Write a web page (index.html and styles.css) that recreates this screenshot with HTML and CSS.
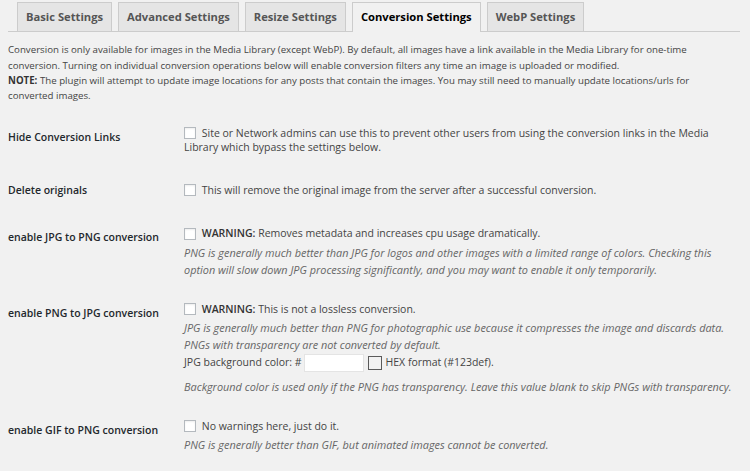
FILE: index.html
```html
<!DOCTYPE html>
<html lang="en">
<head>
<meta charset="utf-8">
<title>Conversion Settings</title>
<link rel="stylesheet" href="styles.css">
</head>
<body>
<div class="wrap">
  <nav class="tabs">
    <a class="tab">Basic Settings</a>
    <a class="tab">Advanced Settings</a>
    <a class="tab">Resize Settings</a>
    <a class="tab tab-active">Conversion Settings</a>
    <a class="tab">WebP Settings</a>
  </nav>

  <p class="intro">Conversion is only available for images in the Media Library (except WebP). By default, all images have a link available in the Media Library for one-time conversion. Turning on individual conversion operations below will enable conversion filters any time an image is uploaded or modified.<br><strong>NOTE:</strong> The plugin will attempt to update image locations for any posts that contain the images. You may still need to manually update locations/urls for converted images.</p>

  <div class="form">
    <div class="row">
      <div class="th">Hide Conversion Links</div>
      <div class="td">
        <label class="cb"><input type="checkbox"> Site or Network admins can use this to prevent other users from using the conversion links in the Media Library which bypass the settings below.</label>
      </div>
    </div>

    <div class="row">
      <div class="th">Delete originals</div>
      <div class="td">
        <label class="cb"><input type="checkbox"> This will remove the original image from the server after a successful conversion.</label>
      </div>
    </div>

    <div class="row">
      <div class="th">enable JPG to PNG conversion</div>
      <div class="td">
        <label class="cb"><input type="checkbox"> <b>WARNING:</b> Removes metadata and increases cpu usage dramatically.</label>
        <p class="desc">PNG is generally much better than JPG for logos and other images with a limited range of colors. Checking this option will slow down JPG processing significantly, and you may want to enable it only temporarily.</p>
      </div>
    </div>

    <div class="row">
      <div class="th">enable PNG to JPG conversion</div>
      <div class="td">
        <label class="cb"><input type="checkbox"> <b>WARNING:</b> This is not a lossless conversion.</label>
        <p class="desc">JPG is generally much better than PNG for photographic use because it compresses the image and discards data. PNGs with transparency are not converted by default.</p>
        <p class="color-line">JPG background color: #<input type="text" class="hex"><span class="swatch"></span>HEX format (#123def).</p>
        <p class="desc desc-spaced">Background color is used only if the PNG has transparency. Leave this value blank to skip PNGs with transparency.</p>
      </div>
    </div>

    <div class="row">
      <div class="th">enable GIF to PNG conversion</div>
      <div class="td">
        <label class="cb"><input type="checkbox"> No warnings here, just do it.</label>
        <p class="desc">PNG is generally better than GIF, but animated images cannot be converted.</p>
      </div>
    </div>
  </div>
</div>
</body>
</html>
```

FILE: styles.css
```css
* {
  box-sizing: border-box;
}

body {
  margin: 0;
  background: #f1f1f1;
  color: #444;
  font-family: "Open Sans", "Noto Sans", sans-serif;
  font-size: 9.7px;
}

.wrap {
  padding: 2px 10px 0 8px;
}

/* Tabs */
.tabs {
  display: flex;
  align-items: flex-start;
  gap: 6px;
  padding-left: 9px;
  border-bottom: 1px solid #ccc;
}

.tab {
  display: block;
  height: 29px;
  line-height: 28px;
  padding: 0 8px;
  border: 1px solid #ccc;
  border-bottom: 0;
  background: #e5e5e5;
  color: #555;
  font-size: 11.2px;
  font-weight: 700;
  white-space: nowrap;
}

.tab-active {
  height: 30px;
  margin-bottom: -1px;
  background: #f1f1f1;
  color: #000;
}

/* Intro */
.intro {
  max-width: 726px;
  margin: 10.3px 0 10px;
  line-height: 15.33px;
}

.intro strong {
  font-weight: 700;
  color: #333;
}

/* Form rows */
.row {
  display: grid;
  grid-template-columns: 168px 1fr;
}

.th {
  align-self: start;
  padding: 16px 0;
  font-size: 10.5px;
  line-height: 15.6px;
  font-weight: 600;
  color: #23282d;
}

.td {
  align-self: center;
  padding: 12px 4px 12px 8px;
  font-size: 10.5px;
  line-height: 14.56px;
}

.cb b {
  font-weight: 600;
  color: #333;
}

.cb input[type="checkbox"] {
  -webkit-appearance: none;
  appearance: none;
  display: inline-block;
  width: 12px;
  height: 12px;
  margin: -2px 3px 0 0;
  border: 1px solid #b4b9be;
  background: #fff;
  box-shadow: inset 0 1px 2px rgba(0, 0, 0, 0.07);
  vertical-align: middle;
}

.desc {
  margin: 2.7px 0 0;
  font-size: 10.9px;
  line-height: 17px;
  font-style: italic;
  color: #666;
}

.desc-spaced {
  margin-top: 5.5px;
}

.color-line {
  margin: 0;
  line-height: 19px;
}

.hex {
  width: 60px;
  height: 18px;
  margin: 0 4px 0 2px;
  padding: 0;
  border: 1px solid #e4e4e4;
  background: #fff;
  vertical-align: middle;
}

.swatch {
  display: inline-block;
  width: 14px;
  height: 14px;
  margin-right: 4px;
  border: 1px solid #5a5a5a;
  vertical-align: middle;
}
```
